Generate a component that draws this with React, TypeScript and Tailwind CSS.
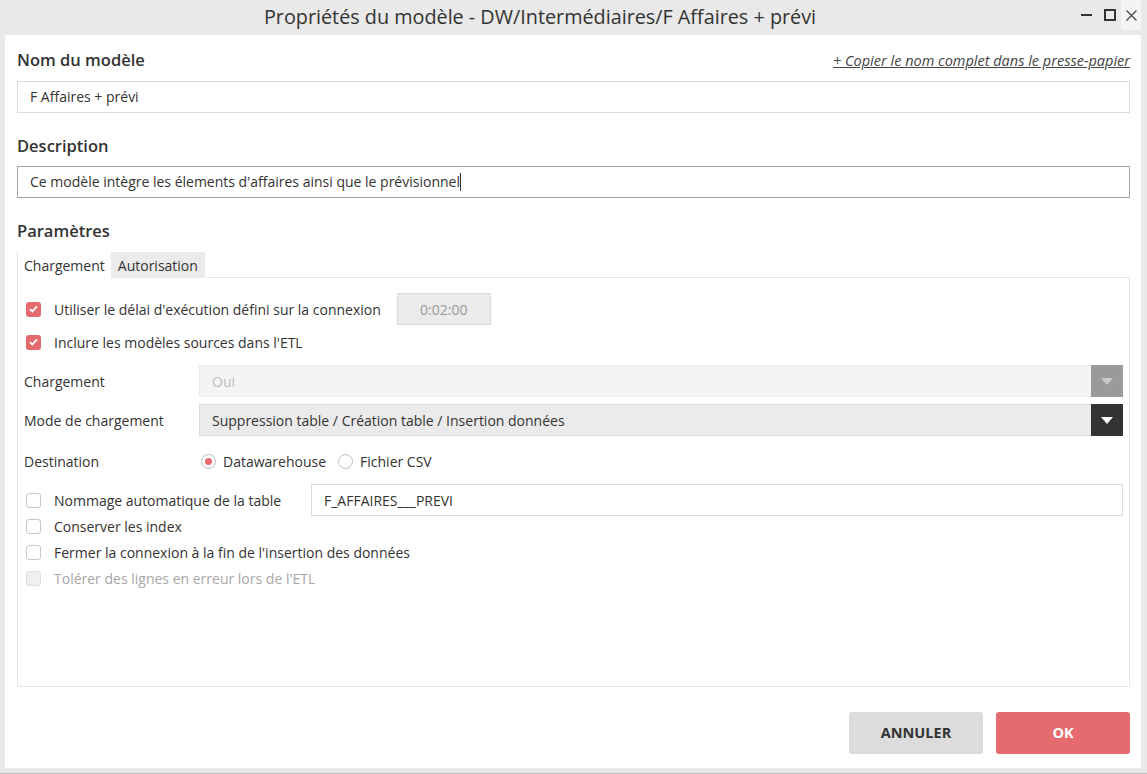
import React from "react";

const FONT = { fontFamily: '"Open Sans", "Noto Sans", sans-serif' };

function Check({ checked, disabled }: { checked?: boolean; disabled?: boolean }) {
  if (checked) {
    return (
      <span className="w-[15px] h-[15px] rounded-[3px] bg-[#e46a6e] flex items-center justify-center shrink-0">
        <svg width="9" height="8" viewBox="0 0 9 8">
          <path d="M1 4.2 L3.4 6.4 L8 1.4" fill="none" stroke="#fff" strokeWidth="1.8" />
        </svg>
      </span>
    );
  }
  return (
    <span
      className={
        "w-[15px] h-[15px] rounded-[3px] border shrink-0 " +
        (disabled ? "bg-[#f0f0f0] border-[#dedede]" : "bg-white border-[#c8c8c8]")
      }
    />
  );
}

function Radio({ checked }: { checked?: boolean }) {
  return (
    <span className="w-[15px] h-[15px] rounded-full border border-[#bdbdbd] bg-white flex items-center justify-center shrink-0">
      {checked && <span className="w-[7px] h-[7px] rounded-full bg-[#e46a6e]" />}
    </span>
  );
}

function Select({ value, disabled }: { value: string; disabled?: boolean }) {
  return (
    <div
      className={
        "flex-1 h-[32px] flex border " +
        (disabled ? "bg-[#f4f4f4] border-[#ececec]" : "bg-[#ebebeb] border-[#dcdcdc]")
      }
    >
      <div className={"flex-1 flex items-center px-3 " + (disabled ? "text-[#bdbdbd]" : "text-[#333]")}>
        {value}
      </div>
      <div
        className={
          "w-[32px] -my-px -mr-px flex items-center justify-center " +
          (disabled ? "bg-[#9a9a9a]" : "bg-[#333333]")
        }
      >
        <svg width="12" height="7" viewBox="0 0 12 7">
          <path d="M0 0 H12 L6 7 Z" fill={disabled ? "#c8c8c8" : "#ffffff"} />
        </svg>
      </div>
    </div>
  );
}

export default function App() {
  return (
    <div className="w-[1147px] h-[774px] bg-[#e9e9e9] flex flex-col text-[#333]" style={FONT}>
      {/* Title bar */}
      <div className="h-[35px] flex items-start shrink-0">
        <div className="flex-1 h-[33px] flex items-center justify-center pl-[7px] text-[19.8px] text-[#333]">
          Propriétés du modèle - DW/Intermédiaires/F Affaires + prévi
        </div>
        <div className="flex items-start h-[30px]">
          <div className="w-[26px] h-[30px] flex items-center justify-center">
            <span className="w-[11px] h-[2px] bg-[#333]" />
          </div>
          <div className="w-[22px] h-[30px] flex items-center justify-center">
            <span className="w-[12px] h-[12px] border-2 border-[#333]" />
          </div>
          <div className="w-[20px] h-[30px] bg-[#f4f4f4] flex items-center justify-center">
            <svg width="11" height="11" viewBox="0 0 11 11">
              <path d="M0.5 0.5 L10.5 10.5 M10.5 0.5 L0.5 10.5" stroke="#444" strokeWidth="1.2" />
            </svg>
          </div>
          <div className="w-[6px]" />
        </div>
      </div>

      {/* Body */}
      <div className="ml-[5px] mr-[6px] h-[733px] bg-white flex flex-col pl-3 pr-[11px] pt-[13px]">
        <div className="flex items-end justify-between">
          <div className="text-[16.5px] font-semibold">Nom du modèle</div>
          <a className="text-[14.5px] italic underline text-[#444] pb-px">
            + Copier le nom complet dans le presse-papier
          </a>
        </div>
        <div className="mt-[8px] h-[32px] border border-[#dcdcdc] flex items-center px-3 text-[14px]">
          F Affaires + prévi
        </div>

        <div className="mt-[21px] text-[16.5px] font-semibold">Description</div>
        <div className="mt-[7px] h-[32px] border border-[#a8a8a8] flex items-center px-3 text-[14px]">
          Ce modèle intègre les élements d'affaires ainsi que le prévisionnel
          <span className="w-px h-[18px] bg-[#333]" />
        </div>

        <div className="mt-[21px] text-[16.5px] font-semibold">Paramètres</div>
        {/* Tabs */}
        <div className="mt-[9px] flex h-[26px] text-[14px]">
          <div className="px-[6px] flex items-center bg-white border-l border-[#e5e5e5]">Chargement</div>
          <div className="px-[7px] flex items-center bg-[#ebebeb]">Autorisation</div>
          <div className="flex-1 border-b border-[#e5e5e5]" />
        </div>
        <div className="h-[409px] border border-t-0 border-[#e5e5e5] pl-[8px] pr-[6px] pt-[15px] text-[14px]">
          <div className="flex items-center h-[32px] gap-[13px]">
            <Check checked />
            <span>Utiliser le délai d'exécution défini sur la connexion</span>
            <div className="ml-[3px] w-[94px] h-[32px] bg-[#ebebeb] border border-[#dcdcdc] flex items-center justify-center text-[#9a9a9a]">
              0:02:00
            </div>
          </div>
          <div className="flex items-center h-[26px] mt-[4px] gap-[13px]">
            <Check checked />
            <span>Inclure les modèles sources dans l'ETL</span>
          </div>

          <div className="flex items-center mt-[10px]">
            <div className="w-[173px] -ml-[2px] mr-[2px]">Chargement</div>
            <Select value="Oui" disabled />
          </div>
          <div className="flex items-center mt-[7px]">
            <div className="w-[173px] -ml-[2px] mr-[2px]">Mode de chargement</div>
            <Select value="Suppression table / Création table / Insertion données" />
          </div>
          <div className="flex items-center mt-[11px] h-[28px]">
            <div className="w-[175px] -ml-[2px] mr-[2px]">Destination</div>
            <div className="flex items-center gap-[7px]">
              <Radio checked />
              <span>Datawarehouse</span>
            </div>
            <div className="flex items-center gap-[7px] ml-[12px]">
              <Radio />
              <span>Fichier CSV</span>
            </div>
          </div>

          <div className="flex items-center mt-[12px] h-[26px]">
            <div className="w-[285px] flex items-center gap-[13px]">
              <Check />
              <span>Nommage automatique de la table</span>
            </div>
            <div className="flex-1 h-[32px] -my-[3px] border border-[#dcdcdc] flex items-center px-3">
              F_AFFAIRES___PREVI
            </div>
          </div>
          <div className="flex items-center h-[26px] gap-[13px]">
            <Check />
            <span>Conserver les index</span>
          </div>
          <div className="flex items-center h-[26px] gap-[13px]">
            <Check />
            <span>Fermer la connexion à la fin de l'insertion des données</span>
          </div>
          <div className="flex items-center h-[26px] gap-[13px]">
            <Check disabled />
            <span className="text-[#a8a8a8]">Tolérer des lignes en erreur lors de l'ETL</span>
          </div>
        </div>

        <div className="mt-[25px] flex justify-end gap-[13px]">
          <button className="w-[134px] h-[42px] rounded-[3px] bg-[#dcdcdc] text-[14.5px] font-bold text-[#333]">
            ANNULER
          </button>
          <button className="w-[134px] h-[42px] rounded-[3px] bg-[#e66b6e] text-[14.5px] font-bold text-white">
            OK
          </button>
        </div>
      </div>
      <div className="flex-1" />
      <div className="h-px bg-[#bdbdbd]" />
    </div>
  );
}
